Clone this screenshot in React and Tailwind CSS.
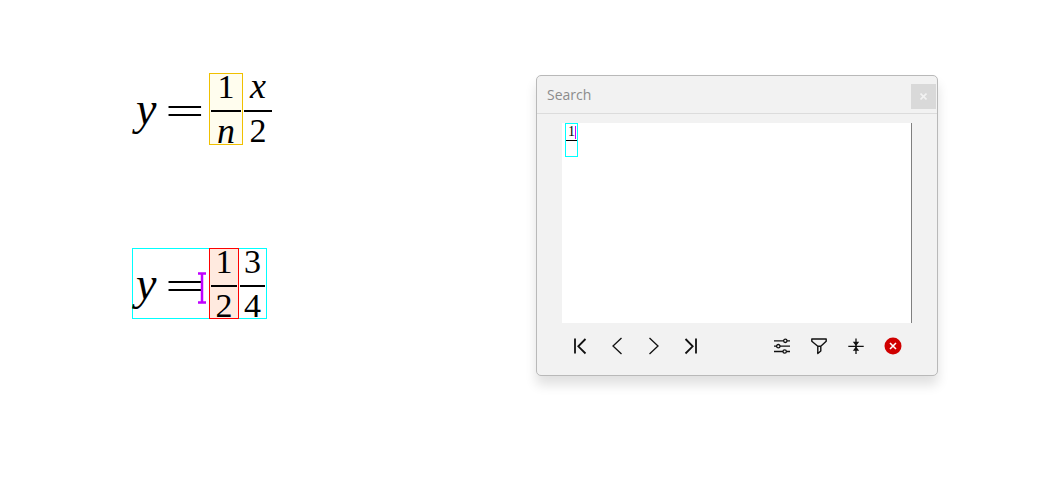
import React, { useState } from "react";

function Fraction({ top, bottom, className }) {
  return (
    <div className={`flex flex-col items-center border ${className}`}>
      <div className="h-[36px] leading-[25px]">{top}</div>
      <div className="h-[2px] w-full bg-black" />
      <div className="h-[31px] leading-[38px]">{bottom}</div>
    </div>
  );
}

function Num({ children }) {
  return <span className="text-[34px]">{children}</span>;
}

function Variable({ children }) {
  return <i className="text-[36px]">{children}</i>;
}

function LeftSide() {
  return (
    <div className="flex items-center pl-[2px]">
      <i className="w-[27px] text-[46px] leading-[64px]">y</i>
      <span className="w-[47px] font-['DejaVu_Sans'] text-[52px] font-extralight leading-[70px]">
        =
      </span>
    </div>
  );
}

function IconButton({ label, onClick, children }) {
  return (
    <button
      type="button"
      aria-label={label}
      onClick={onClick}
      className="flex h-[47px] w-[37px] items-center justify-center"
    >
      <svg
        className="h-[19px] w-[19px]"
        viewBox="0 0 19 19"
        fill="none"
        stroke="#111"
        strokeWidth="1.3"
      >
        {children}
      </svg>
    </button>
  );
}

function SearchDialog({ onClose }) {
  const [numerator, setNumerator] = useState("1");
  const [denominator, setDenominator] = useState("");

  const clear = () => {
    setNumerator("");
    setDenominator("");
  };

  return (
    <section
      aria-label="Search"
      className="mr-[115px] mt-[75px] w-[402px] shrink-0 self-start rounded-[5px] border border-[#b9b9b9] bg-[#f2f2f2] pb-[5px] shadow-[0_9px_12px_rgba(0,0,0,0.12)]"
    >
      <header className="flex h-[38px] items-center justify-between border-b border-[#dcdcdc] pl-[10px] pr-px">
        <h2 className="font-['Open_Sans',sans-serif] text-[14px] text-[#8c8c8c]">
          Search
        </h2>
        <button
          type="button"
          aria-label="Close"
          onClick={onClose}
          className="mt-[4px] flex h-[25px] w-[25px] items-center justify-center bg-[#d9d9d9]"
        >
          <svg className="h-[7px] w-[7px]" viewBox="0 0 7 7" stroke="#f2f2f2" strokeWidth="1.6">
            <path d="M.5.5l6 6M6.5.5l-6 6" />
          </svg>
        </button>
      </header>

      <div className="mx-[25px] mt-[9px] h-[200px] border-r border-[#808080] bg-white pl-[3px]">
        <div className="flex w-[13px] flex-col border border-[#00ffff]">
          <div className="flex h-[16px] items-center">
            <input
              aria-label="Numerator"
              value={numerator}
              onChange={(e) => setNumerator(e.target.value)}
              className="h-[16px] w-[9px] pl-[2px] text-[14px] leading-[16px] outline-none"
            />
            <span className="h-[13px] w-px bg-[#bf00ff]" />
          </div>
          <div className="h-px bg-black" />
          <input
            aria-label="Denominator"
            value={denominator}
            onChange={(e) => setDenominator(e.target.value)}
            className="h-[15px] w-full text-[14px] outline-none"
          />
        </div>
      </div>

      <div className="mx-[25px] flex justify-between">
        <div className="flex">
          <IconButton label="First match">
            <path d="M4 1.5v15M14.5 2L7.300 9.300l7.200 7.200" strokeWidth="1.8" />
          </IconButton>
          <IconButton label="Previous match">
            <path d="M13.5 1L5 9l8.5 8" />
          </IconButton>
          <IconButton label="Next match">
            <path d="M4.5 1L13 9l-8.5 8" />
          </IconButton>
          <IconButton label="Last match">
            <path d="M3.5 2l7.2 7.3-7.2 7.2M14 1.500v15" strokeWidth="1.8" />
          </IconButton>
        </div>
        <div className="flex">
          <IconButton label="Options">
            <path d="M1 3.8h9.500M14 3.800h3M1 9.200h2.500M7 9.200h10M1 14.500h9M13.500 14.500h3.500" />
            <circle cx="12.3" cy="3.8" r="1.7" />
            <circle cx="5.3" cy="9.2" r="1.7" />
            <circle cx="11.7" cy="14.5" r="1.7" />
          </IconButton>
          <IconButton label="Filter">
            <path
              d="M1.800 2h14.400v2.300l-5.400 5v4.700l-3 2.500V9.300l-6-5zM7.800 9.300h3"
              strokeWidth="1.4"
              strokeLinejoin="round"
            />
          </IconButton>
          <IconButton label="Collapse">
            <path d="M1.3 9.3h15.4M9 1.5v15.5" />
            <path d="M5.800 4.800h6.400L9 9zM5.800 13.800h6.400L9 9.600z" fill="#111" stroke="none" />
          </IconButton>
          <IconButton label="Clear" onClick={clear}>
            <circle cx="9" cy="9" r="8.5" fill="#d00000" stroke="none" />
            <path d="M6 6l6 6M12 6l-6 6" stroke="#fff" strokeWidth="1.6" />
          </IconButton>
        </div>
      </div>
    </section>
  );
}

export default function App() {
  const [searchOpen, setSearchOpen] = useState(true);

  return (
    <main className="flex min-h-screen bg-white font-['Liberation_Serif',serif] text-black">
      <div className="flex flex-1 flex-col items-start gap-[103px] pl-[132px] pt-[73px]">
        <div className="flex h-[72px] border-l border-transparent pl-px">
          <LeftSide />
          <Fraction
            top={<Num>1</Num>}
            bottom={<Variable>n</Variable>}
            className="-ml-px w-[34px] border-[#f0c000] bg-[#fffdee] px-px"
          />
          <Fraction
            top={<Variable>x</Variable>}
            bottom={<Num>2</Num>}
            className="w-[30px] border-transparent"
          />
        </div>

        <div className="relative flex h-[71px] border border-[#00ffff] pl-px">
          <LeftSide />
          {/* insertion point */}
          <svg
            className="absolute left-[65px] top-[23px] h-[32px] w-[8px]"
            viewBox="0 0 8 32"
            stroke="#bf00ff"
            strokeWidth="2.5"
            fill="none"
          >
            <path d="M0 1.5h8M4 1.5v29M0 30.5h8" />
          </svg>
          <Fraction
            top={<Num>1</Num>}
            bottom={<Num>2</Num>}
            className="-my-px -ml-px w-[30px] border-[#ff0000] bg-[#ffeadf] px-px"
          />
          <Fraction
            top={<Num>3</Num>}
            bottom={<Num>4</Num>}
            className="-my-px w-[27px] border-transparent"
          />
        </div>
      </div>

      {searchOpen && <SearchDialog onClose={() => setSearchOpen(false)} />}
    </main>
  );
}
